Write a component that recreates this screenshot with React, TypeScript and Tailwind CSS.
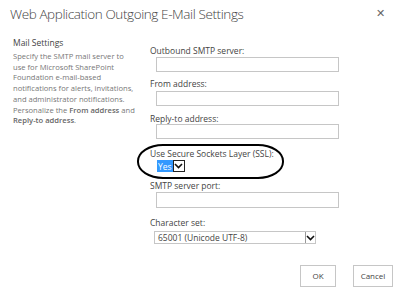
import React from 'react';

interface FieldProperties {
  label: string;
  className?: string;
  children: React.ReactNode;
}

function Field({ label, className, children }: FieldProperties) {
  return (
    <div className={className}>
      <div className="h-[11px] text-[8.5px] leading-[11px] text-[#444]">{label}</div>
      {children}
    </div>
  );
}

function TextBox({ className }: { className?: string }) {
  return (
    <div className={`ml-[6px] h-[15px] w-[183px] border border-[#c6c6c6] bg-white ${className ?? ''}`} />
  );
}

function Chevron() {
  return (
    <svg width="9" height="6" viewBox="0 0 9 6" aria-hidden="true">
      <path d="M1 1 L4.5 4.5 L8 1" fill="none" stroke="#111" strokeWidth="1.6" />
    </svg>
  );
}

export default function App() {
  return (
    <div
      className="relative flex h-[292px] w-[404px] flex-col bg-white"
      style={{ fontFamily: '"Open Sans", "Noto Sans", sans-serif' }}
    >
      <div className="flex items-start justify-between pl-[10px] pr-[19px] pt-[4px]">
        <h1 className="text-[13.5px] font-light leading-[20px] tracking-[-0.4px] text-[#444]">
          Web Application Outgoing E-Mail Settings
        </h1>
        <span className="mt-[2px] text-[11px] leading-[14px] text-[#666]">✕</span>
      </div>

      <div className="mt-[13px] flex">
        <div className="w-[137px] pl-[13px]">
          <div className="text-[8.5px] leading-[11px] text-[#444]">Mail Settings</div>
          <p className="mt-[3px] whitespace-nowrap text-[7.6px] leading-[10.7px] text-[#777]">
            Specify the SMTP mail server to
            <br />
            use for Microsoft SharePoint
            <br />
            Foundation e-mail-based
            <br />
            notifications for alerts, invitations,
            <br />
            and administrator notifications.
            <br />
            Personalize the <span className="font-semibold text-[#666]">From address</span> and
            <br />
            <span className="font-semibold text-[#666]">Reply-to address</span>.
          </p>
        </div>

        <div className="pl-[13px] pt-[8px]">
          <Field label="Outbound SMTP server:">
            <TextBox className="mt-[1px]" />
          </Field>
          <Field label="From address:" className="mt-[6px]">
            <TextBox className="mt-[2px]" />
          </Field>
          <Field label="Reply-to address:" className="mt-[7px]">
            <TextBox />
          </Field>
          <Field label="Use Secure Sockets Layer (SSL):" className="mt-[9px]">
            <div className="ml-[7px] mt-[1px] flex h-[12px] w-[28px] items-stretch">
              <span className="flex items-center bg-[#3399ff] px-[1px] text-[8.5px] leading-[11px] text-white">
                Yes
              </span>
              <span className="flex w-[14px] items-center justify-center border border-[#222] bg-white">
                <Chevron />
              </span>
            </div>
          </Field>
          <Field label="SMTP server port:" className="mt-[8px]">
            <TextBox className="mt-[1px] !h-[16px]" />
          </Field>
          <Field label="Character set:" className="mt-[9px]">
            <div className="ml-[4px] mt-[3px] flex h-[13px] w-[162px] items-center justify-between border border-[#c6c6c6] bg-white pl-[3px]">
              <span className="text-[8.5px] leading-[11px] text-[#444]">65001 (Unicode UTF-8)</span>
              <span className="flex h-full w-[10px] items-center justify-center border-l border-[#999]">
                <Chevron />
              </span>
            </div>
          </Field>
        </div>
      </div>

      <div className="mt-auto mb-[5px] flex justify-end gap-[17px] pr-[11px]">
        <button className="h-[22px] w-[36px] border border-[#c6c6c6] bg-white text-[8px] text-[#444]">
          OK
        </button>
        <button className="h-[22px] w-[40px] border border-[#c6c6c6] bg-white text-[8px] text-[#444]">
          Cancel
        </button>
      </div>

      <div className="pointer-events-none absolute left-[137px] top-[144px] h-[35px] w-[147px] rounded-[26px/17px] border-2 border-black" />
    </div>
  );
}
